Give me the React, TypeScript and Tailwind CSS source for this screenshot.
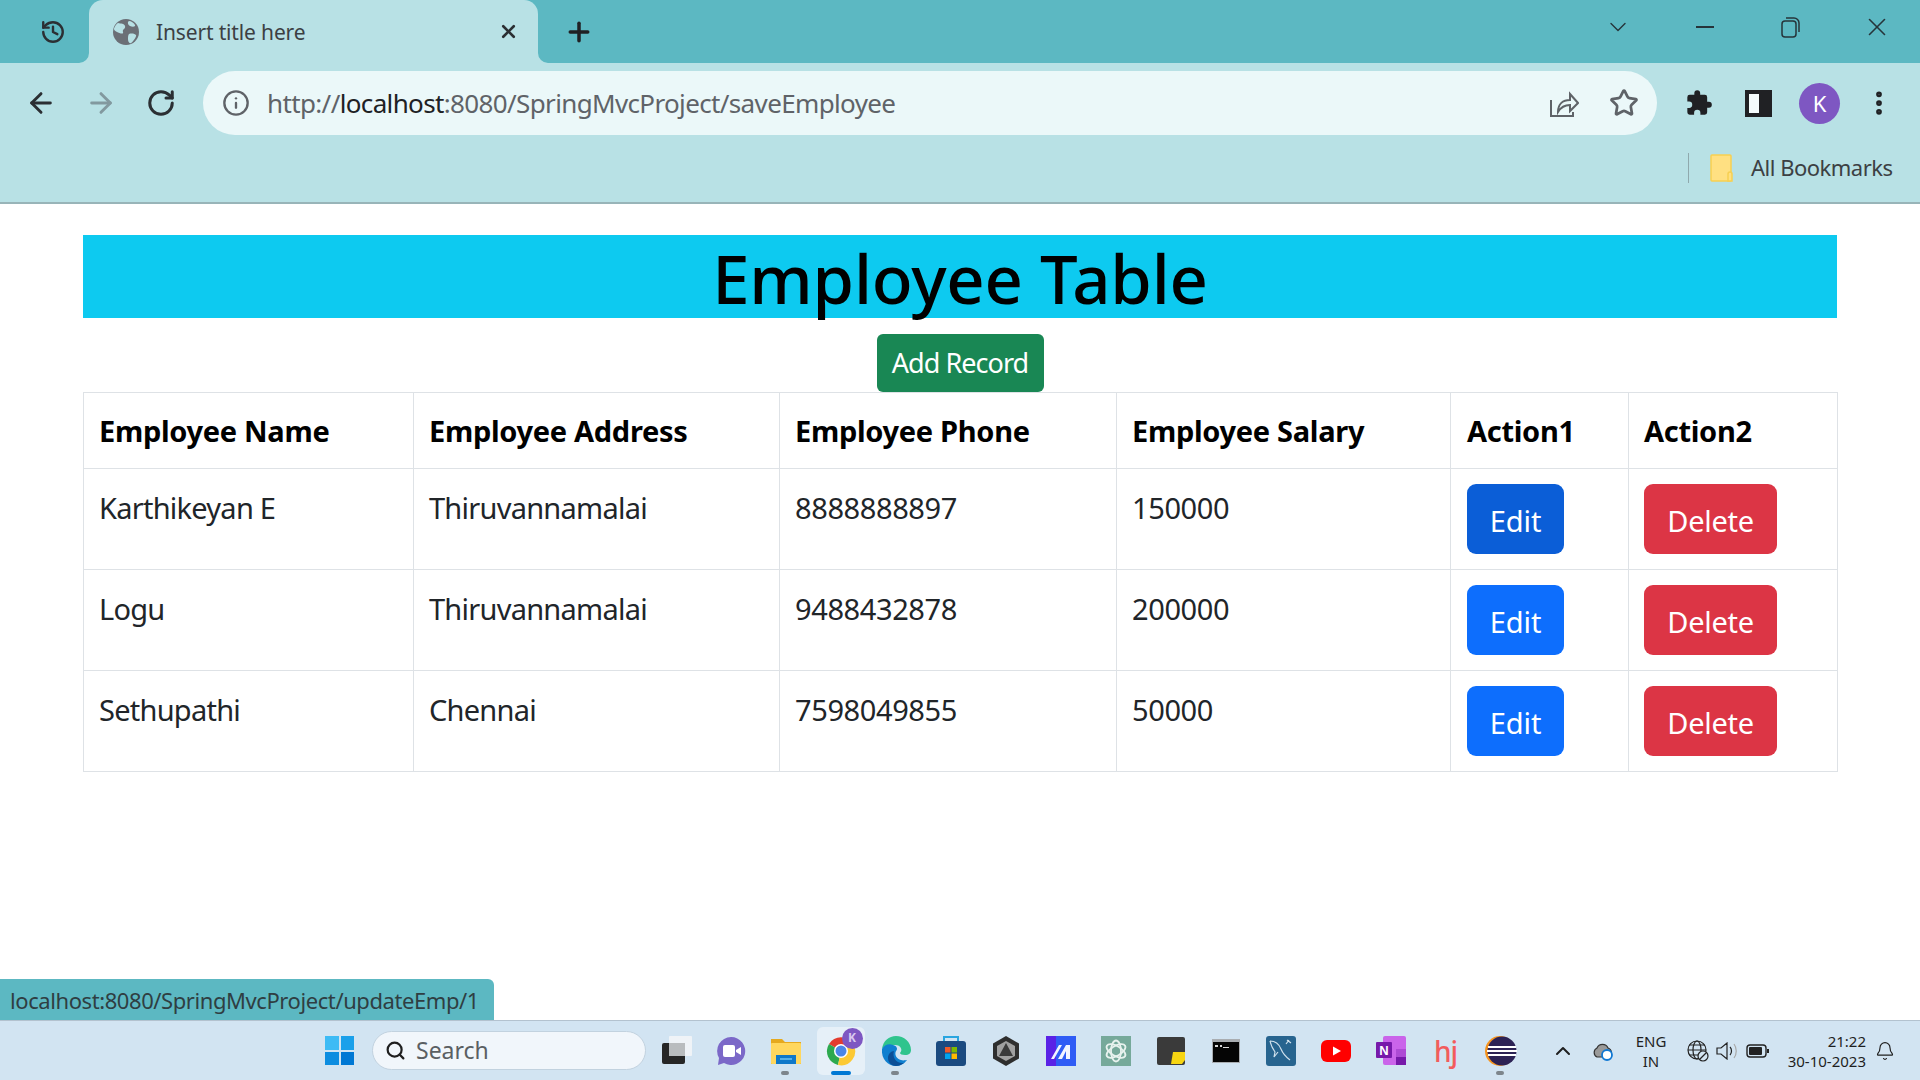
import React from "react";
import { ArrowLeft, ArrowRight, Bell, ChevronDown, ChevronUp, History, Info, MoreVertical, Plus, RotateCw, Search, Star, X } from "lucide-react";

type Employee = { name: string; address: string; phone: string; salary: string };

const employees: Employee[] = [
  { name: "Karthikeyan E", address: "Thiruvannamalai", phone: "8888888897", salary: "150000" },
  { name: "Logu", address: "Thiruvannamalai", phone: "9488432878", salary: "200000" },
  { name: "Sethupathi", address: "Chennai", phone: "7598049855", salary: "50000" },
];

const Globe = () => (
  <svg width="28" height="28" viewBox="0 0 28 28">
    <circle cx="14" cy="14" r="13" fill="#6b6f76" />
    <path d="M6 5c3 1 6 0 7 3s-3 3-2 6-4 1-6 0-3-2-3-3 2-5 4-6zM17 16c3-1 6 0 7 1s-3 7-5 8-3-2-3-4 0-4 1-5zM17 3c2 0 5 2 6 4s-3 2-5 1-3-4-1-5z" fill="#b8e1e5" />
  </svg>
);

const TaskIcon = ({ children, active, dot }: { children: React.ReactNode; active?: boolean; dot?: boolean }) => (
  <div className="relative flex h-[60px] w-[55px] items-center justify-center">
    {active && <div className="absolute left-[4px] top-[6px] h-[48px] w-[48px] rounded-md bg-[#e6f0f8]" />}
    <div className="relative">{children}</div>
    {active && <div className="absolute left-[18px] top-[50px] h-[4px] w-[20px] rounded-full bg-[#0078d4]" />}
    {dot && <div className="absolute left-[23px] top-[50px] h-[4px] w-[8px] rounded-full bg-[#7d858c]" />}
  </div>
);

const TaskView = () => (
  <svg width="32" height="32" viewBox="0 0 32 32">
    <rect x="2" y="8" width="23" height="21" rx="2" fill="#262626" />
    <rect x="9" y="1" width="23" height="20" rx="1" fill="#f4f6f8" opacity="0.85" />
    <rect x="9" y="8" width="16" height="13" fill="#b9bcbe" />
  </svg>
);

const Meet = () => (
  <svg width="32" height="32" viewBox="0 0 32 32">
    <path d="M16 2a14 14 0 1 1-7 26l-6 2 1-7A14 14 0 0 1 16 2z" fill="#7b68c8" />
    <rect x="8" y="10" width="12" height="12" rx="2" fill="#fff" />
    <path d="M21 15l5-3v8l-5-3z" fill="#fff" />
  </svg>
);

const Folder = () => (
  <svg width="32" height="32" viewBox="0 0 32 32">
    <path d="M1 4h11l3 3h16v22H1z" fill="#e5a91f" />
    <rect x="1" y="8" width="30" height="21" rx="1" fill="#ffd75e" />
    <path d="M6 20h20v9H6z" fill="#0f78c9" />
    <rect x="10" y="23" width="12" height="2" fill="#54b0ea" />
  </svg>
);

const ChromeLogo = () => (
  <svg width="30" height="30" viewBox="0 0 30 30">
    <path d="M15 15L3 8a14 14 0 0 1 24 0z" fill="#e33b2e" />
    <path d="M15 15L3 8a14 14 0 0 0 9 21z" fill="#2da94f" />
    <path d="M15 15l12-7a14 14 0 0 1-15 21z" fill="#fcc934" />
    <circle cx="15" cy="15" r="7" fill="#fff" />
    <circle cx="15" cy="15" r="5.5" fill="#4a86e8" />
  </svg>
);

const Edge = () => (
  <svg width="32" height="32" viewBox="0 0 32 32">
    <path d="M2 14C3 6 9 1 16 1c8 0 15 6 15 14 0 3-2 5-6 5-3 0-5-1-5-2 3-3 1-8-5-8-6 0-11 1-13 4z" fill="#2fc48d" />
    <path d="M2 14c2-4 7-6 11-4 4 1 5 4 3 6-2 4 1 8 5 9 2 1 5 0 6 0-3 4-7 6-11 6C8 31 1 24 2 14z" fill="#0f7fd0" />
    <path d="M14 16c-2 6 2 13 10 12-3 2-5 3-8 3-5 0-8-4-8-8 0-4 3-7 6-7z" fill="#0b4f97" />
  </svg>
);

const Store = () => (
  <svg width="30" height="32" viewBox="0 0 30 32">
    <path d="M8 6V2h14v4" fill="none" stroke="#2aa6e0" strokeWidth="2" />
    <rect x="0" y="6" width="30" height="25" rx="3" fill="#1b4a80" />
    <rect x="9" y="12" width="5.5" height="5.5" fill="#ef5a29" />
    <rect x="15.5" y="12" width="5.5" height="5.5" fill="#7fba00" />
    <rect x="9" y="18.5" width="5.5" height="5.5" fill="#00a4ef" />
    <rect x="15.5" y="18.5" width="5.5" height="5.5" fill="#ffb900" />
  </svg>
);

const Hex = () => (
  <svg width="28" height="30" viewBox="0 0 28 30">
    <path d="M14 0l13 7.500v15L14 30 1 22.500v-15z" fill="#2e2e2e" />
    <path d="M14 5l9 5v10l-9 5-9-5V10z" fill="#a0a0a0" />
    <path d="M14 7l7 13H7z" fill="#3a3a3a" />
  </svg>
);

const Mathpix = () => (
  <svg width="30" height="30" viewBox="0 0 30 30">
    <rect width="30" height="30" fill="#2f5cf5" />
    <rect width="10" height="30" fill="#5a22e6" />
    <path d="M5 23L13 9h3l-8 14zM12 23l8-14h4v14h-4v-8l-4 8z" fill="#f2f5ff" />
  </svg>
);

const ChatGpt = () => (
  <svg width="30" height="30" viewBox="0 0 30 30">
    <rect width="30" height="30" fill="#76a99a" />
    <g fill="none" stroke="#e8f2ee" strokeWidth="1.800">
      <ellipse cx="15" cy="15" rx="5" ry="10.500" />
      <ellipse cx="15" cy="15" rx="5" ry="10.500" transform="rotate(60 15 15)" />
      <ellipse cx="15" cy="15" rx="5" ry="10.500" transform="rotate(120 15 15)" />
    </g>
  </svg>
);

const Sticky = () => (
  <svg width="28" height="28" viewBox="0 0 28 28">
    <rect width="28" height="28" rx="2" fill="#3a3a3a" />
    <path d="M14 27l2-12h12v8l-3 4z" fill="#f7d512" />
  </svg>
);

const Cmd = () => (
  <svg width="28" height="24" viewBox="0 0 28 24">
    <rect width="28" height="24" fill="#a9adb1" />
    <rect x="1" y="3" width="26" height="20" fill="#050505" />
    <path d="M3 6h3v2H3zM8 6h2v2H8zM11 8h6v1h-6z" fill="#d8d8d8" />
  </svg>
);

const Mysql = () => (
  <svg width="30" height="30" viewBox="0 0 30 30">
    <rect width="30" height="30" rx="3" fill="#27648f" />
    <path d="M4 5c5 0 9 3 11 8s5 8 9 11M4 5c1 5 3 8 5 11l-1 5 4-5M21 4l4 3m-2-3l-3 4" fill="none" stroke="#cfe0ec" strokeWidth="1.200" />
  </svg>
);

const Youtube = () => (
  <svg width="30" height="22" viewBox="0 0 30 22">
    <rect width="30" height="22" rx="6" fill="#ff0000" />
    <path d="M12 6.500l8 4.500-8 4.500z" fill="#fff" />
  </svg>
);

const OneNote = () => (
  <svg width="30" height="30" viewBox="0 0 30 30">
    <rect x="7" y="0" width="23" height="29" rx="2" fill="#ca64ea" />
    <rect x="20" y="13" width="10" height="8" fill="#ae4bd5" />
    <rect x="20" y="21" width="10" height="8" fill="#7719aa" />
    <rect x="0" y="6" width="16" height="16" rx="1" fill="#7719aa" />
    <text x="8" y="19" textAnchor="middle" fontSize="13" fontWeight="700" fill="#fff" fontFamily="Liberation Sans, sans-serif">N</text>
  </svg>
);

const Eclipse = () => (
  <svg width="32" height="32" viewBox="0 0 32 32">
    <circle cx="15" cy="16" r="15" fill="#f7941e" />
    <circle cx="17" cy="16" r="14.500" fill="#2c2255" />
    <path d="M3 12h28M2 16h30M3 20h28" stroke="#fff" strokeWidth="2" />
  </svg>
);

const EmployeeRow = ({ emp, hovered }: { emp: Employee; hovered: boolean }) => (
  <tr className="tracking-[-0.75px]">
    <td className="border border-[#dee2e6] px-[15px] pt-[17px] pb-[15px] align-top">{emp.name}</td>
    <td className="border border-[#dee2e6] px-[15px] pt-[17px] pb-[15px] align-top">{emp.address}</td>
    <td className="border border-[#dee2e6] px-[15px] pt-[17px] pb-[15px] align-top tracking-[-0.4px]">{emp.phone}</td>
    <td className="border border-[#dee2e6] px-[15px] pt-[17px] pb-[15px] align-top tracking-[-0.4px]">{emp.salary}</td>
    <td className="border border-[#dee2e6] pl-[16px] pr-[14px] pt-[15px] pb-[15px] align-top">
      <button className={`flex h-[70px] w-[97px] items-center justify-center rounded-[9px] pt-[3px] tracking-[-0.1px] text-white ${hovered ? "bg-[#0b5ed7]" : "bg-[#0d6efd]"}`}>Edit</button>
    </td>
    <td className="border border-[#dee2e6] px-[15px] pt-[15px] pb-[15px] align-top">
      <button className="flex h-[70px] w-[133px] items-center justify-center rounded-[9px] pt-[3px] tracking-[-0.3px] text-white bg-[#dc3545]">Delete</button>
    </td>
  </tr>
);

export default function App() {
  return (
    <div className="flex h-screen w-[1920px] flex-col overflow-hidden bg-white font-['Noto_Sans',sans-serif] text-[#212529]">
      {/* tab strip */}
      <div className="flex h-[63px] shrink-0 items-center bg-[#5cb8c2]">
        <div className="flex w-[89px] justify-center pl-[16px]">
          <History size={26} strokeWidth={2.2} className="text-[#2b2f33]" />
        </div>
        <div className="relative flex h-[63px] w-[449px] items-center rounded-t-[14px] bg-[#b8e1e5] pl-[23px]">
          {/* flared corners at the foot of the tab */}
          <svg width="10" height="10" viewBox="0 0 10 10" className="absolute bottom-0 -left-[10px]">
            <path d="M10 0v10H0a10 10 0 0 0 10-10z" fill="#b8e1e5" />
          </svg>
          <svg width="10" height="10" viewBox="0 0 10 10" className="absolute bottom-0 -right-[10px]">
            <path d="M0 0v10h10A10 10 0 0 1 0 0z" fill="#b8e1e5" />
          </svg>
          <Globe />
          <span className="ml-[16px] pt-[2px] text-[21px] tracking-[-0.15px] text-[#3c4043]">Insert title here</span>
          <X size={21} strokeWidth={3} className="absolute left-[409px] top-[21px] text-[#2b2f33]" />
        </div>
        <Plus size={30} strokeWidth={2.8} className="ml-[26px] text-[#202124]" />
        <ChevronDown size={28} strokeWidth={1.2} className="ml-[1010px] -mt-[10px] text-[#26343a]" />
        <div className="ml-[64px] -mt-[10px] h-[2px] w-[18px] bg-[#26343a]" />
        <svg width="22" height="24" viewBox="0 0 22 24" className="ml-[66px] -mt-[10px]" fill="none" stroke="#26343a" strokeWidth="1.500">
          <rect x="2" y="6" width="14" height="16" rx="3" />
          <path d="M6 3h8a5 5 0 0 1 5 5v9" />
        </svg>
        <X size={30} strokeWidth={1.3} className="ml-[60px] -mt-[10px] text-[#26343a]" />
      </div>

      {/* toolbar */}
      <div className="flex h-[72px] shrink-0 items-center bg-[#b8e1e5] pt-[8px]">
        <ArrowLeft size={32} strokeWidth={2.2} className="ml-[25px] text-[#2b2f33]" />
        <ArrowRight size={32} strokeWidth={2.2} className="ml-[28px] text-[#82999f]" />
        <RotateCw size={30} strokeWidth={2.4} className="ml-[29px] text-[#2b2f33]" />
        <div className="ml-[27px] flex h-[64px] w-[1454px] items-center rounded-full bg-[#ebf8f9]">
          <Info size={28} strokeWidth={2} className="ml-[19px] text-[#5f6368]" />
          <span className="ml-[17px] w-[1245px] text-[26px] tracking-[-0.64px] text-[#5f6368]">
            http://<span className="text-[#202124]">localhost</span>:8080/SpringMvcProject/saveEmployee
          </span>
          <svg width="30" height="30" viewBox="0 0 30 30" fill="none" stroke="#5f6368" strokeWidth="2" className="ml-[37px]">
            <path d="M2 12v16h22v-4M9 24c0-8 5-12 12-12V6l8 9-8 8v-6c-6 0-9 2-12 7z" />
          </svg>
          <Star size={30} strokeWidth={2.2} className="ml-[30px] text-[#5f6368]" />
        </div>
        <svg width="28" height="28" viewBox="0 0 24 24" fill="#202124" className="ml-[28px]">
          <path d="M20.500 11H19V7a2 2 0 0 0-2-2h-4V3.500a2.500 2.500 0 0 0-5 0V5H4a2 2 0 0 0-2 2v3.800h1.500a2.700 2.700 0 0 1 0 5.400H2V20a2 2 0 0 0 2 2h3.800v-1.500a2.700 2.700 0 0 1 5.400 0V22H17a2 2 0 0 0 2-2v-4h1.500a2.500 2.500 0 0 0 0-5z" />
        </svg>
        <div className="ml-[32px] flex h-[27px] w-[27px] items-center border-[4px] border-[#202124] bg-[#202124] pr-[9px]">
          <div className="h-full w-full bg-[#f4fbfc]" />
        </div>
        <div className="ml-[27px] flex h-[41px] w-[41px] items-center justify-center rounded-full bg-[#7e57c2] text-[22px] text-white">K</div>
        <MoreVertical size={30} strokeWidth={2.6} className="ml-[24px] text-[#202124]" />
      </div>

      {/* bookmarks bar */}
      <div className="flex h-[69px] shrink-0 items-center border-b-2 border-[#98b4b8] bg-[#b8e1e5] pb-[2px]">
        <div className="ml-[1688px] h-[30px] w-[1px] bg-[#8fa9ad]" />
        <svg width="24" height="28" viewBox="0 0 24 28" className="ml-[21px]">
          <rect x="1" y="1" width="20" height="26" rx="1" fill="#ffe082" stroke="#f7cf52" strokeWidth="1.500" />
          <path d="M18 27v-7a2 2 0 0 1 4 0v7z" fill="#ffe082" stroke="#f7cf52" strokeWidth="1.500" />
        </svg>
        <span className="ml-[17px] text-[22px] tracking-[-0.5px] text-[#3c4043]">All Bookmarks</span>
      </div>

      {/* page */}
      <div className="relative flex-1 px-[83px] pt-[31px]">
        <h1 className="flex h-[83px] items-center justify-center bg-[#0dcaf0] pt-[3px] text-[67px] font-medium tracking-[-0.2px] text-black">Employee Table</h1>
        <div className="mt-[16px] flex justify-center">
          <button className="flex h-[58px] w-[167px] items-center justify-center rounded-[6px] bg-[#198754] text-[27px] tracking-[-0.95px] text-white">Add Record</button>
        </div>
        <table className="w-full table-fixed border-collapse text-[29px]">
          <colgroup>
            <col className="w-[330px]" />
            <col className="w-[366px]" />
            <col className="w-[337px]" />
            <col className="w-[334px]" />
            <col className="w-[178px]" />
            <col className="w-[209px]" />
          </colgroup>
          <thead>
            <tr className="h-[76px] font-bold tracking-[-0.3px] text-black">
              <th className="border border-[#dee2e6] px-[15px] text-left">Employee Name</th>
              <th className="border border-[#dee2e6] px-[15px] text-left">Employee Address</th>
              <th className="border border-[#dee2e6] px-[15px] text-left">Employee Phone</th>
              <th className="border border-[#dee2e6] px-[15px] text-left">Employee Salary</th>
              <th className="border border-[#dee2e6] pl-[16px] pr-[14px] text-left">Action1</th>
              <th className="border border-[#dee2e6] px-[15px] text-left">Action2</th>
            </tr>
          </thead>
          <tbody>
            {employees.map((emp, i) => (
              <EmployeeRow key={emp.name} emp={emp} hovered={i === 0} />
            ))}
          </tbody>
        </table>
        <div className="absolute bottom-0 left-0 flex h-[41px] w-[494px] items-center rounded-tr-[6px] bg-[#5cb8c2] pl-[10px] pt-[1px] text-[22px] tracking-[-0.42px] text-[#2f3e42]">
          localhost:8080/SpringMvcProject/updateEmp/1
        </div>
      </div>

      {/* taskbar */}
      <div className="flex h-[60px] shrink-0 items-center border-t border-[#b3c2cf] bg-[#d2e4f2] pl-[312px]">
        <div className="flex w-[55px] justify-center">
          <div className="grid h-[29px] w-[29px] grid-cols-2 gap-[2px]">
            <div className="bg-[#3dbbf5]" />
            <div className="bg-[#1aa0ea]" />
            <div className="bg-[#0d8de0]" />
            <div className="bg-[#0078d4]" />
          </div>
        </div>
        <div className="ml-[5px] flex h-[39px] w-[274px] items-center rounded-full border border-[#c2d2df] bg-[#f1f6fb] pl-[12px] text-[#5a5f63]">
          <Search size={21} strokeWidth={2.5} className="text-[#1f1f1f]" />
          <span className="ml-[10px] text-[23px]">Search</span>
        </div>
        <div className="ml-[2px] flex items-center">
          <TaskIcon><TaskView /></TaskIcon>
          <TaskIcon><Meet /></TaskIcon>
          <TaskIcon dot><Folder /></TaskIcon>
          <TaskIcon active>
            <ChromeLogo />
            <div className="absolute -right-[7px] -top-[8px] flex h-[21px] w-[21px] items-center justify-center rounded-full bg-[#7e57c2] text-[12px] font-bold text-[#d8c8ef]">K</div>
          </TaskIcon>
          <TaskIcon dot><Edge /></TaskIcon>
          <TaskIcon><Store /></TaskIcon>
          <TaskIcon><Hex /></TaskIcon>
          <TaskIcon><Mathpix /></TaskIcon>
          <TaskIcon><ChatGpt /></TaskIcon>
          <TaskIcon><Sticky /></TaskIcon>
          <TaskIcon><Cmd /></TaskIcon>
          <TaskIcon><Mysql /></TaskIcon>
          <TaskIcon><Youtube /></TaskIcon>
          <TaskIcon><OneNote /></TaskIcon>
          <TaskIcon><span className="text-[28px] font-medium tracking-[-1px] text-[#f25c5c]">hj</span></TaskIcon>
          <TaskIcon dot><Eclipse /></TaskIcon>
        </div>
        <ChevronUp size={24} strokeWidth={2} className="ml-[23px] text-[#1f1f1f]" />
        <svg width="22" height="20" viewBox="0 0 22 20" className="ml-[17px]">
          <path d="M5 16a5 5 0 0 1 0-9 6 6 0 0 1 11 0 5 5 0 0 1 1 9z" fill="#9a9a9a" stroke="#333" strokeWidth="1.200" />
          <circle cx="15" cy="14" r="5" fill="#fff" stroke="#0f78d4" strokeWidth="1.800" />
        </svg>
        <div className="ml-[14px] flex w-[46px] flex-col items-center text-[15px] leading-[20px] text-[#1f1f1f]">
          <span>ENG</span>
          <span>IN</span>
        </div>
        <svg width="22" height="22" viewBox="0 0 22 22" fill="none" stroke="#222" strokeWidth="1.200" className="ml-[13px]">
          <circle cx="10" cy="10" r="9" />
          <ellipse cx="10" cy="10" rx="4" ry="9" />
          <path d="M1 10h18M2 5h16M2 15h16" />
          <circle cx="16" cy="16" r="5" fill="#d2e4f2" />
          <path d="M13 19l6-6" />
        </svg>
        <svg width="22" height="18" viewBox="0 0 22 18" fill="none" stroke="#222" strokeWidth="1.200" className="ml-[7px]">
          <path d="M1 6h4l6-5v16l-6-5H1zM14 5c2 2 2 6 0 8" />
          <path d="M18 2c3 4 3 10 0 14" stroke="#a8a8a8" />
        </svg>
        <svg width="24" height="14" viewBox="0 0 24 14" className="ml-[8px]">
          <rect x="1" y="1" width="19" height="12" rx="3" fill="none" stroke="#222" strokeWidth="1.400" />
          <rect x="3" y="3" width="13" height="8" rx="1" fill="#222" />
          <rect x="21" y="5" width="2" height="4" fill="#222" />
        </svg>
        <div className="ml-[12px] flex w-[84px] flex-col items-end text-[15px] leading-[20px] text-[#1f1f1f]">
          <span>21:22</span>
          <span>30-10-2023</span>
        </div>
        <Bell size={20} strokeWidth={1.4} className="ml-[9px] text-[#1f1f1f]" />
      </div>
    </div>
  );
}
